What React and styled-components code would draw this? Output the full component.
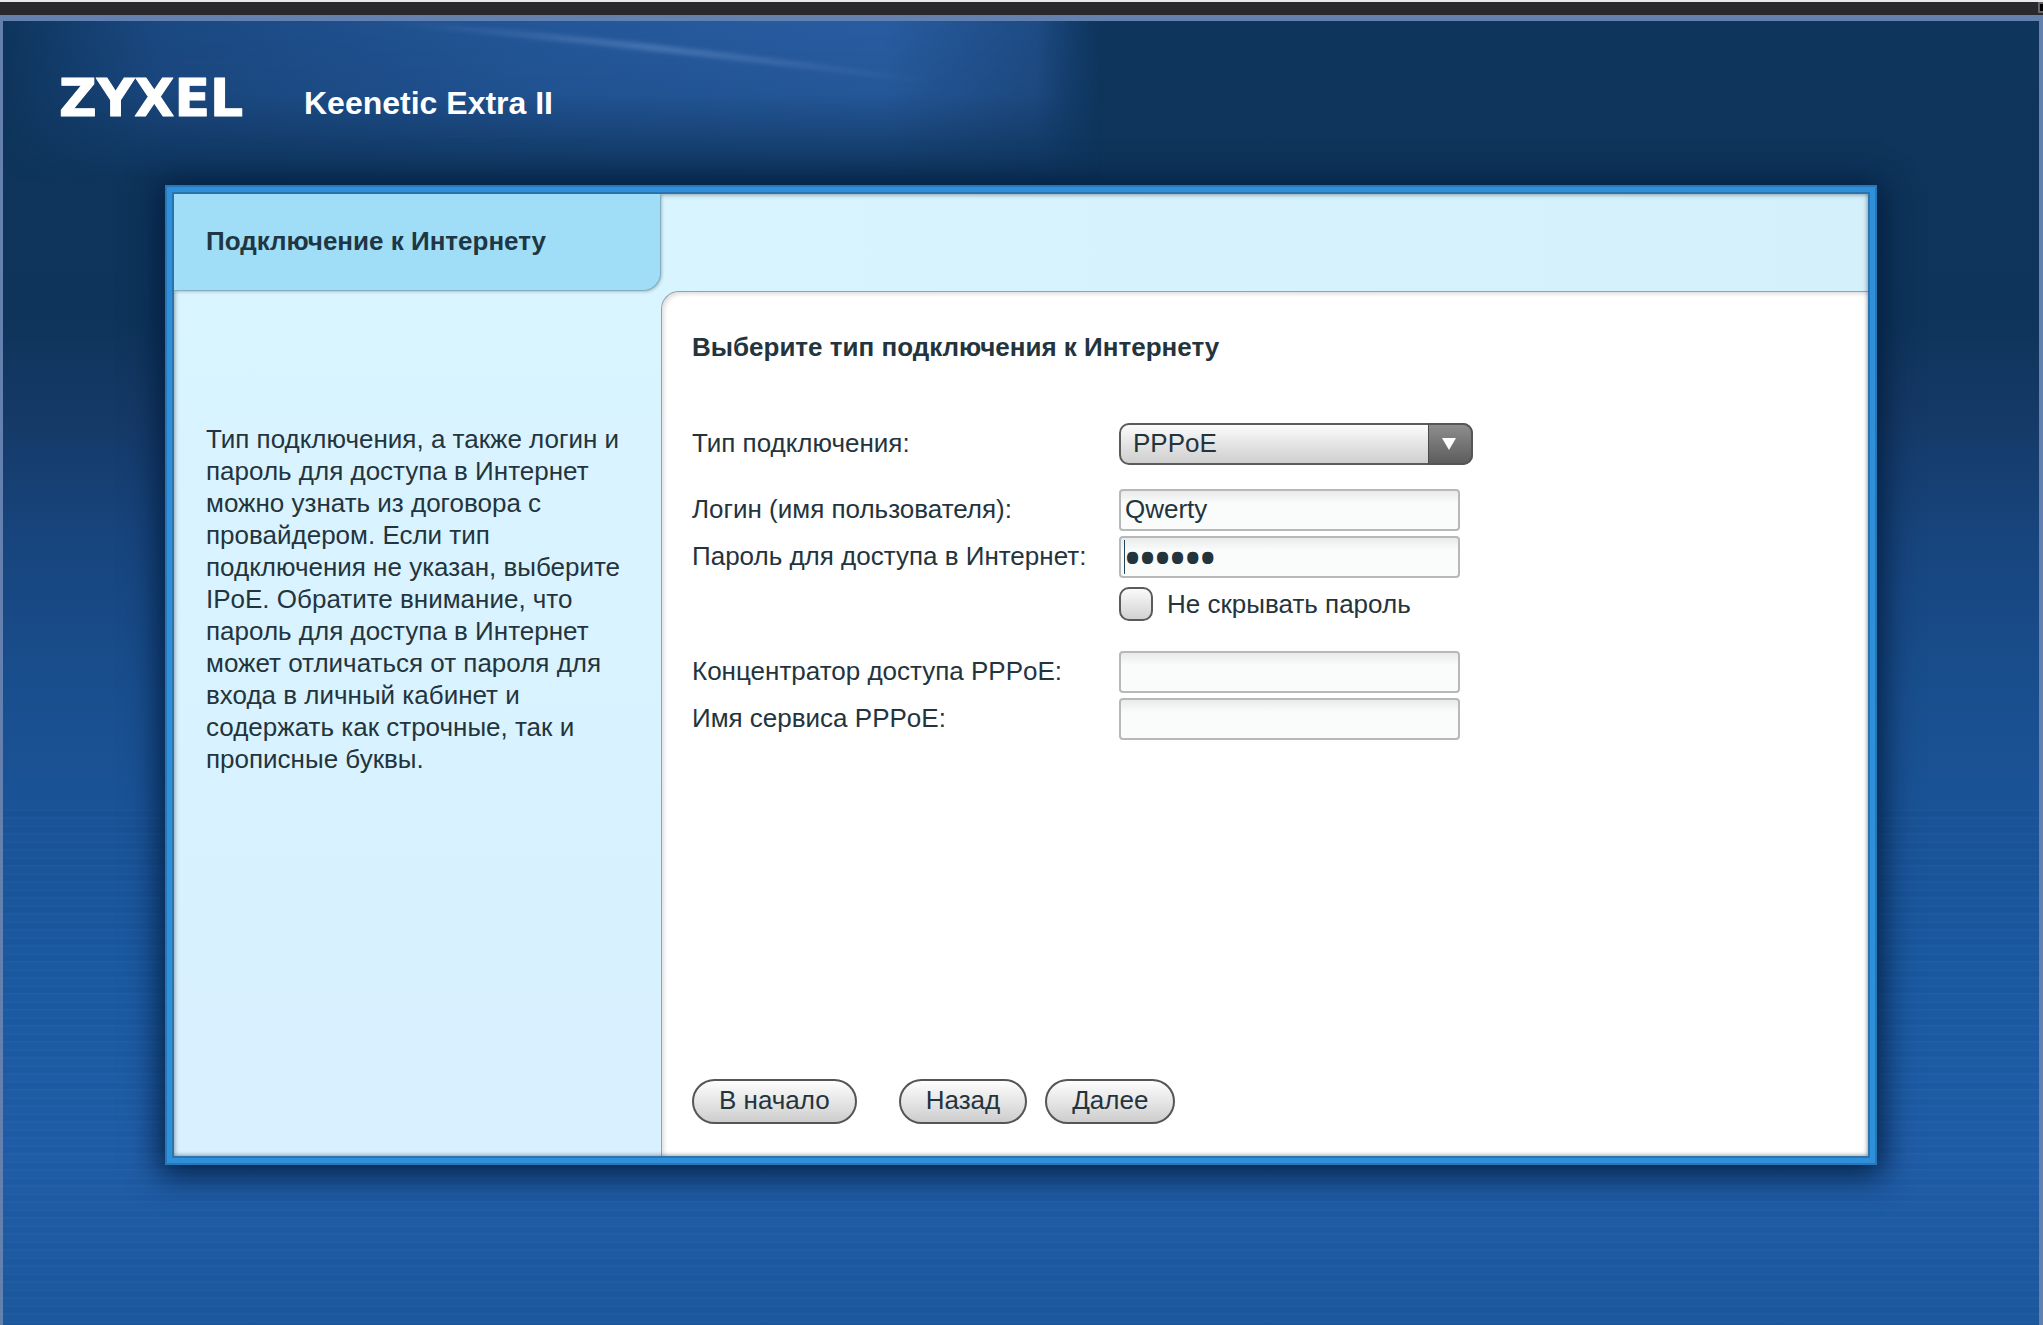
import React, { useState } from 'react';
import styled, { createGlobalStyle } from 'styled-components';

const GlobalStyle = createGlobalStyle`
  * {
    box-sizing: border-box;
  }

  body {
    margin: 0;
    font-family: 'Liberation Sans', Arial, sans-serif;
    font-size: 26px;
    line-height: 32px;
    color: #24343d;
  }

  h1, h2, p {
    margin: 0;
  }
`;

const Window = styled.div`
  display: flex;
  flex-direction: column;
  min-height: 100vh;
`;

const TopStrip = styled.div`
  display: flex;
  justify-content: flex-end;
  height: 15px;
  padding-bottom: 2px;
  border-top: 2px solid #e9e9eb;
  background: #29292d;
`;

const StripCorner = styled.span`
  width: 5px;
  border: 2px solid #66666a;
  border-right: 0;
  background: #050505;
`;

const Page = styled.div`
  position: relative;
  flex: 1;
  display: flex;
  flex-direction: column;
  padding: 0 162px 160px;
  border: solid #6480ae;
  border-width: 6px 4px 0 3px;
  background: repeating-linear-gradient(
        180deg,
        rgba(255, 255, 255, 0) 0 6px,
        rgba(255, 255, 255, 0.01) 6px 8px,
        rgba(0, 0, 0, 0.02) 8px 14px,
        rgba(255, 255, 255, 0.02) 14px 16px
      )
      0 100% / 100% 40% no-repeat,
    linear-gradient(
      180deg,
      #0e355c 0%,
      #0e345b 23%,
      #153966 30%,
      #17447c 39%,
      #194f8f 52%,
      #1a559a 64%,
      #1b5aa2 75%,
      #205da8 87%,
      #1c589d 100%
    );
`;

const Glow = styled.svg`
  position: absolute;
  top: 0;
  left: 0;
  width: 54%;
  height: 160px;
`;

const Header = styled.header`
  position: relative;
  display: flex;
  align-items: flex-end;
  gap: 60px;
  height: 164px;
  margin-left: -106px;
  padding-bottom: 66px;
`;

const LogoMark = styled.svg`
  display: block;
  width: 185px;
  height: 44px;
  overflow: visible;
  font-family: 'DejaVu Sans', Verdana, sans-serif;
  font-size: 52px;
  font-weight: bold;
`;

const Model = styled.h1`
  font-size: 32px;
  line-height: 32px;
  color: #fff;
`;

const Panel = styled.div`
  position: relative;
  flex: 1;
  display: grid;
  grid-template-columns: 487px 1fr;
  grid-template-rows: 97px 1fr;
  border: 2px solid #2678b8;
  padding: 7px;
  background: linear-gradient(#d9f5ff, #d8f0ff) content-box, #2f8fd8;
  box-shadow: 0 4px 30px 6px rgba(0, 26, 56, 0.9);
`;

const InnerEdge = styled.div`
  position: absolute;
  inset: 5px;
  border: 2px solid #2a74b0;
  box-shadow: inset 0 0 5px rgba(50, 60, 70, 0.65);
  pointer-events: none;
`;

const Tab = styled.div`
  position: relative;
  z-index: 1;
  display: flex;
  align-items: center;
  padding: 0 32px 3px;
  border: solid #84adbe;
  border-width: 0 1px 1px 0;
  border-bottom-right-radius: 18px;
  background: #a0def7;
  box-shadow: 1px 1px 3px rgba(0, 40, 60, 0.25);
  color: #1f3644;
`;

const Heading = styled.h2`
  font-size: 26px;
  line-height: 32px;
`;

const TopBar = styled.div`
  background: linear-gradient(90deg, #d8f4ff, #d4f0fb);
`;

const Sidebar = styled.aside`
  padding: 132px 32px 32px;
`;

const Content = styled.form`
  display: flex;
  flex-direction: column;
  padding: 39px 30px 32px;
  border: solid #8fa3ad;
  border-width: 1px 0 0 1px;
  border-top-left-radius: 18px;
  background: #fff;
  box-shadow: inset 2px 2px 4px rgba(0, 0, 0, 0.14);
`;

const Fields = styled.div`
  display: flex;
  flex-direction: column;
  gap: 24px;
  margin-top: 60px;
`;

const Group = styled.div`
  display: flex;
  flex-direction: column;
  gap: 5px;
`;

const Row = styled.div`
  display: grid;
  grid-template-columns: 427px 1fr;
  align-items: center;
  min-height: 42px;
`;

const Label = styled.label`
  padding-bottom: 2px;
`;

const TextInput = styled.input`
  width: 341px;
  height: 42px;
  padding: 0 4px 2px;
  border: 2px solid #b7b9b9;
  border-radius: 4px;
  outline: 0;
  background: linear-gradient(#e9ebeb, #fafcfc 12px);
  color: inherit;
  font-family: inherit;
  font-size: 26px;
`;

// larger and bolder while hidden so that the bullets are clearly visible
const PasswordInput = styled(TextInput)`
  &[type='password'] {
    font-family: 'Open Sans', sans-serif;
    font-size: 40px;
    font-weight: 700;
  }
`;

const InputWrap = styled.div`
  position: relative;
  width: 341px;
  height: 42px;
`;

const Caret = styled.span`
  position: absolute;
  top: 4px;
  left: 5px;
  width: 1px;
  height: 34px;
  background: #1d4663;
`;

const SelectWrap = styled.div`
  display: grid;
  width: 354px;
  height: 42px;

  > * {
    grid-area: 1 / 1;
  }
`;

const Select = styled.select`
  appearance: none;
  padding: 0 56px 2px 12px;
  border: 2px solid #5b5b5b;
  border-radius: 10px;
  background: linear-gradient(#fcfcfc, #e4e4e4 50%, #cfcfcf);
  color: inherit;
  font-family: inherit;
  font-size: 26px;
`;

const SelectArrow = styled.span`
  display: flex;
  align-items: center;
  justify-content: center;
  justify-self: end;
  width: 45px;
  padding-right: 2px;
  border: 2px solid #555;
  border-left: 1px solid #4a4a4a;
  border-radius: 0 10px 10px 0;
  background: linear-gradient(#8d8d8d, #5d5d5d);
  pointer-events: none;
`;

const CheckLabel = styled.label`
  grid-column: 2;
  display: flex;
  align-items: center;
  gap: 14px;
  height: 44px;
  padding-bottom: 2px;
`;

const Checkbox = styled.input`
  appearance: none;
  width: 34px;
  height: 34px;
  margin: 0;
  border: 2px solid #5b5b5b;
  border-radius: 10px;
  background: linear-gradient(#fafafa, #d2d2d2);

  &:checked {
    box-shadow: inset 0 0 0 7px #dedede;
    background: #24343d;
  }
`;

const Actions = styled.div`
  display: flex;
  gap: 18px;
  margin-top: auto;
`;

const Button = styled.button`
  height: 45px;
  padding: 0 25px 2px;
  margin-right: ${props => (props.$separate ? '24px' : '0')};
  border: 2px solid #555;
  border-radius: 23px;
  background: linear-gradient(#fdfdfd, #e6e6e6 50%, #cdcdcd);
  color: inherit;
  font-family: inherit;
  font-size: 26px;
`;

const Logo = () => (
  <LogoMark viewBox="0 0 185 44" role="img" aria-label="ZYXEL">
    <text x="0" y="41" fill="#fff" stroke="#fff" strokeWidth="1" strokeLinejoin="round">
      ZYXEL
    </text>
  </LogoMark>
);

const HeaderGlow = () => (
  <Glow viewBox="0 0 1100 160" preserveAspectRatio="none" aria-hidden="true">
    <defs>
      <linearGradient id="glow-x">
        <stop offset="0" stopColor="#1b4c8a" stopOpacity="0" />
        <stop offset="0.14" stopColor="#1c4a84" />
        <stop offset="0.5" stopColor="#265a9f" />
        <stop offset="0.8" stopColor="#2b60a8" />
        <stop offset="0.94" stopColor="#265696" stopOpacity="0.75" />
        <stop offset="1" stopColor="#1b4c8a" stopOpacity="0" />
      </linearGradient>
      <linearGradient id="glow-y" x1="0" y1="0" x2="0" y2="1">
        <stop offset="0" stopColor="#fff" stopOpacity="0.92" />
        <stop offset="0.45" stopColor="#fff" stopOpacity="0.8" />
        <stop offset="0.75" stopColor="#fff" stopOpacity="0.35" />
        <stop offset="1" stopColor="#fff" stopOpacity="0" />
      </linearGradient>
      <linearGradient id="streak">
        <stop offset="0" stopColor="#7d9fd4" stopOpacity="0" />
        <stop offset="0.5" stopColor="#7d9fd4" stopOpacity="0.25" />
        <stop offset="1" stopColor="#7d9fd4" stopOpacity="0" />
      </linearGradient>
      <filter id="soften">
        <feGaussianBlur stdDeviation="2" />
      </filter>
      <mask id="fade">
        <rect width="1100" height="160" fill="url(#glow-y)" />
      </mask>
    </defs>
    <rect width="1100" height="160" fill="url(#glow-x)" mask="url(#fade)" />
    <path
      d="M370 0 Q640 18 940 62 Q640 26 370 0Z"
      fill="url(#streak)"
      stroke="url(#streak)"
      strokeWidth="4"
      filter="url(#soften)"
    />
  </Glow>
);

const App = () => {
  const [type, setType] = useState('PPPoE');
  const [login, setLogin] = useState('Qwerty');
  const [password, setPassword] = useState('qwerty');
  const [showPassword, setShowPassword] = useState(false);
  const [concentrator, setConcentrator] = useState('');
  const [service, setService] = useState('');

  return (
    <Window>
      <GlobalStyle />
      <TopStrip>
        <StripCorner />
      </TopStrip>
      <Page>
        <HeaderGlow />
        <Header>
          <Logo />
          <Model>Keenetic Extra II</Model>
        </Header>
        <Panel>
          <Tab>
            <Heading>Подключение к Интернету</Heading>
          </Tab>
          <TopBar />
          <Sidebar>
            <p>
              Тип подключения, а также логин и пароль для доступа в Интернет можно узнать из
              договора с провайдером. Если тип подключения не указан, выберите IPoE. Обратите
              внимание, что пароль для доступа в Интернет может отличаться от пароля для входа в
              личный кабинет и содержать как строчные, так и прописные буквы.
            </p>
          </Sidebar>
          <Content onSubmit={e => e.preventDefault()}>
            <Heading>Выберите тип подключения к Интернету</Heading>
            <Fields>
              <Row>
                <Label htmlFor="type">Тип подключения:</Label>
                <SelectWrap>
                  <Select id="type" value={type} onChange={e => setType(e.target.value)}>
                    <option>PPPoE</option>
                    <option>IPoE</option>
                  </Select>
                  <SelectArrow>
                    <svg width="16" height="14" viewBox="0 0 16 14" aria-hidden="true">
                      <path d="M1 1h14L8 13z" fill="#fff" />
                    </svg>
                  </SelectArrow>
                </SelectWrap>
              </Row>
              <Group>
                <Row>
                  <Label htmlFor="login">Логин (имя пользователя):</Label>
                  <TextInput id="login" value={login} onChange={e => setLogin(e.target.value)} />
                </Row>
                <Row>
                  <Label htmlFor="password">Пароль для доступа в Интернет:</Label>
                  <InputWrap>
                    <PasswordInput
                      id="password"
                      type={showPassword ? 'text' : 'password'}
                      value={password}
                      onChange={e => setPassword(e.target.value)}
                    />
                    <Caret />
                  </InputWrap>
                </Row>
                <Row>
                  <CheckLabel>
                    <Checkbox
                      type="checkbox"
                      checked={showPassword}
                      onChange={e => setShowPassword(e.target.checked)}
                    />
                    Не скрывать пароль
                  </CheckLabel>
                </Row>
              </Group>
              <Group>
                <Row>
                  <Label htmlFor="concentrator">Концентратор доступа PPPoE:</Label>
                  <TextInput
                    id="concentrator"
                    value={concentrator}
                    onChange={e => setConcentrator(e.target.value)}
                  />
                </Row>
                <Row>
                  <Label htmlFor="service">Имя сервиса PPPoE:</Label>
                  <TextInput
                    id="service"
                    value={service}
                    onChange={e => setService(e.target.value)}
                  />
                </Row>
              </Group>
            </Fields>
            <Actions>
              <Button type="button" $separate>
                В начало
              </Button>
              <Button type="button">Назад</Button>
              <Button type="submit">Далее</Button>
            </Actions>
          </Content>
          <InnerEdge />
        </Panel>
      </Page>
    </Window>
  );
};

export default App;
